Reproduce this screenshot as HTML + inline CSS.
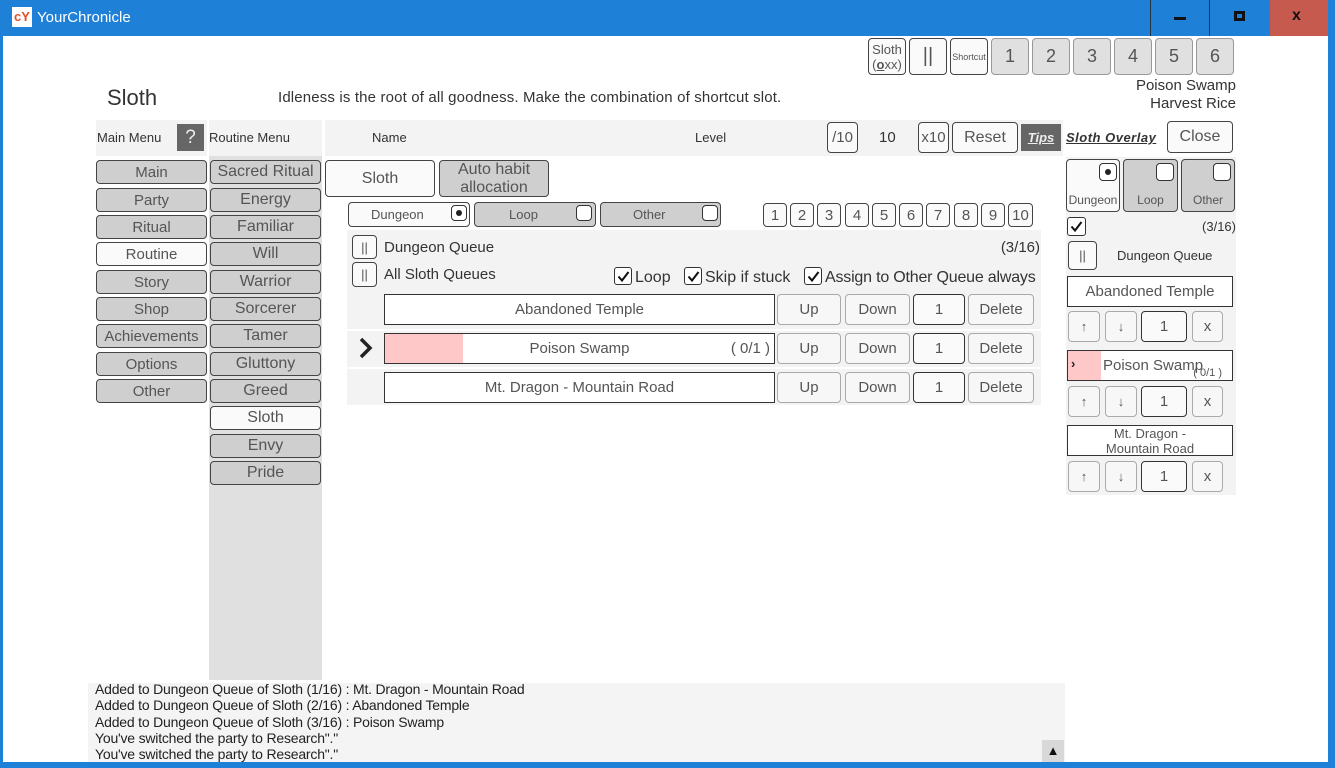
<!DOCTYPE html>
<html><head><meta charset="utf-8"><style>
*{box-sizing:border-box;margin:0;padding:0}
body{width:1335px;height:768px;position:relative;overflow:hidden;background:#1e80d6;font-family:"Liberation Sans",sans-serif;color:#333}
.a{position:absolute}
.b{position:absolute;border:1px solid #444;border-radius:4px;background:#cfcfcf;display:flex;align-items:center;justify-content:center;font-size:15px;color:#555;white-space:nowrap}
.w{background:#fafafa}
.g{background:#e0e0e0;border-color:#999}
.l{background:#f7f7f7;border-color:#aaa}
.t{position:absolute;white-space:nowrap}
.box{position:absolute;border:1px solid #333;background:#fff;display:flex;align-items:center;justify-content:center;font-size:15px;color:#555}
.cb{position:absolute;width:18px;height:18px;border:1px solid #333;border-radius:3px;background:#fff}
.cb svg{position:absolute;left:2px;top:2px}
.rd{position:absolute;width:16px;height:16px;border:1px solid #333;border-radius:4px;background:#fff}
</style></head><body>
<!-- title bar -->
<div class="a" style="left:12px;top:7px;width:20px;height:20px;background:#fff;color:#e2502a;font-size:13px;font-weight:bold;line-height:20px;text-align:center">cY</div>
<div class="t" style="left:37px;top:9px;font-size:15px;color:#fff">YourChronicle</div>
<div class="a" style="left:1150px;top:0;width:60px;height:36px;border-left:1px solid #234;border-right:1px solid #234"></div>
<div class="a" style="left:1174px;top:17px;width:12px;height:3px;background:#111"></div>
<div class="a" style="left:1234px;top:11px;width:11px;height:10px;border:3px solid #111"></div>
<div class="a" style="left:1270px;top:0;width:58px;height:36px;background:#c75a4f"></div>
<div class="t" style="left:1292px;top:7px;font-size:16px;font-weight:bold;color:#111">x</div>
<!-- content -->
<div class="a" style="left:3px;top:36px;width:1325px;height:726px;background:#fff"></div>

<!-- top right buttons -->
<div class="b w" style="left:868px;top:38px;width:38px;height:37px;font-size:13px;line-height:15px;flex-direction:column">Sloth<span>(<u><b>o</b></u>xx)</span></div>
<div class="b w" style="left:909px;top:38px;width:38px;height:37px;font-size:20px">||</div>
<div class="b w" style="left:950px;top:38px;width:38px;height:37px;font-size:9px">Shortcut</div>
<div class="b g" style="left:991px;top:38px;width:38px;height:37px;font-size:18px">1</div>
<div class="b g" style="left:1032px;top:38px;width:38px;height:37px;font-size:18px">2</div>
<div class="b g" style="left:1073px;top:38px;width:38px;height:37px;font-size:18px">3</div>
<div class="b g" style="left:1114px;top:38px;width:38px;height:37px;font-size:18px">4</div>
<div class="b g" style="left:1155px;top:38px;width:38px;height:37px;font-size:18px">5</div>
<div class="b g" style="left:1196px;top:38px;width:38px;height:37px;font-size:18px">6</div>
<div class="t" style="right:99px;top:77px;font-size:15px;text-align:right;line-height:18px">Poison Swamp<br>Harvest Rice</div>

<div class="t" style="left:107px;top:85px;font-size:22px">Sloth</div>
<div class="t" style="left:278px;top:89px;font-size:15px;letter-spacing:0.15px">Idleness is the root of all goodness. Make the combination of shortcut slot.</div>

<!-- header row -->
<div class="a" style="left:96px;top:120px;width:111px;height:36px;background:#f3f3f3"></div>
<div class="a" style="left:209px;top:120px;width:113px;height:36px;background:#f3f3f3"></div>
<div class="a" style="left:325px;top:120px;width:738px;height:36px;background:#f3f3f3"></div>
<div class="t" style="left:97px;top:130px;font-size:13px">Main Menu</div>
<div class="a" style="left:177px;top:124px;width:27px;height:27px;background:#666;color:#eee;font-size:19px;text-align:center;line-height:27px">?</div>
<div class="t" style="left:209px;top:130px;font-size:13px">Routine Menu</div>
<div class="t" style="left:372px;top:130px;font-size:13px">Name</div>
<div class="t" style="left:695px;top:130px;font-size:13px">Level</div>
<div class="b w" style="left:827px;top:122px;width:31px;height:31px;font-size:15px">/10</div>
<div class="t" style="left:879px;top:129px;font-size:15px">10</div>
<div class="b w" style="left:918px;top:122px;width:31px;height:31px;font-size:15px">x10</div>
<div class="b w" style="left:952px;top:122px;width:66px;height:31px;font-size:16px">Reset</div>
<div class="a" style="left:1021px;top:124px;width:40px;height:27px;background:#666;color:#eee;font-size:13px;font-weight:bold;font-style:italic;text-decoration:underline;text-align:center;line-height:27px">Tips</div>
<div class="t" style="left:1066px;top:130px;font-size:13px;font-weight:bold;font-style:italic;text-decoration:underline;letter-spacing:0.5px">Sloth Overlay</div>
<div class="b w" style="left:1167px;top:121px;width:66px;height:32px;font-size:16px">Close</div>

<!-- left menus -->
<div class="a" style="left:209px;top:156px;width:113px;height:524px;background:#e0e0e0"></div>
<div class="b" style="left:96px;top:160px;width:111px;height:24px">Main</div>
<div class="b" style="left:96px;top:188px;width:111px;height:24px">Party</div>
<div class="b" style="left:96px;top:215px;width:111px;height:24px">Ritual</div>
<div class="b w" style="left:96px;top:242px;width:111px;height:24px">Routine</div>
<div class="b" style="left:96px;top:270px;width:111px;height:24px">Story</div>
<div class="b" style="left:96px;top:297px;width:111px;height:24px">Shop</div>
<div class="b" style="left:96px;top:324px;width:111px;height:24px">Achievements</div>
<div class="b" style="left:96px;top:352px;width:111px;height:24px">Options</div>
<div class="b" style="left:96px;top:379px;width:111px;height:24px">Other</div>

<div class="b" style="left:210px;top:160px;width:111px;height:24px;font-size:16px">Sacred Ritual</div>
<div class="b" style="left:210px;top:188px;width:111px;height:24px;font-size:16px">Energy</div>
<div class="b" style="left:210px;top:215px;width:111px;height:24px;font-size:16px">Familiar</div>
<div class="b" style="left:210px;top:242px;width:111px;height:24px;font-size:16px">Will</div>
<div class="b" style="left:210px;top:270px;width:111px;height:24px;font-size:16px">Warrior</div>
<div class="b" style="left:210px;top:297px;width:111px;height:24px;font-size:16px">Sorcerer</div>
<div class="b" style="left:210px;top:324px;width:111px;height:24px;font-size:16px">Tamer</div>
<div class="b" style="left:210px;top:352px;width:111px;height:24px;font-size:16px">Gluttony</div>
<div class="b" style="left:210px;top:379px;width:111px;height:24px;font-size:16px">Greed</div>
<div class="b w" style="left:210px;top:406px;width:111px;height:24px;font-size:16px">Sloth</div>
<div class="b" style="left:210px;top:434px;width:111px;height:24px;font-size:16px">Envy</div>
<div class="b" style="left:210px;top:461px;width:111px;height:24px;font-size:16px">Pride</div>

<!-- tabs -->
<div class="b w" style="left:325px;top:160px;width:110px;height:37px;font-size:16px">Sloth</div>
<div class="b" style="left:439px;top:160px;width:110px;height:37px;font-size:16px;line-height:18px;text-align:center;white-space:normal">Auto habit<br>allocation</div>

<div class="b w" style="left:348px;top:202px;width:122px;height:25px;font-size:13px;justify-content:flex-start;padding-left:22px">Dungeon</div>
<div class="rd" style="left:451px;top:205px"><div class="a" style="left:4px;top:4px;width:6px;height:6px;border-radius:3px;background:#222"></div></div>
<div class="b" style="left:474px;top:202px;width:122px;height:25px;font-size:13px;justify-content:flex-start;padding-left:34px">Loop</div>
<div class="rd" style="left:576px;top:205px"></div>
<div class="b" style="left:600px;top:202px;width:121px;height:25px;font-size:13px;justify-content:flex-start;padding-left:32px">Other</div>
<div class="rd" style="left:702px;top:205px"></div>

<div class="b w" style="left:763px;top:203px;width:24px;height:24px">1</div>
<div class="b w" style="left:790px;top:203px;width:24px;height:24px">2</div>
<div class="b w" style="left:817px;top:203px;width:24px;height:24px">3</div>
<div class="b w" style="left:845px;top:203px;width:24px;height:24px">4</div>
<div class="b w" style="left:872px;top:203px;width:24px;height:24px">5</div>
<div class="b w" style="left:899px;top:203px;width:24px;height:24px">6</div>
<div class="b w" style="left:926px;top:203px;width:24px;height:24px">7</div>
<div class="b w" style="left:954px;top:203px;width:24px;height:24px">8</div>
<div class="b w" style="left:981px;top:203px;width:24px;height:24px">9</div>
<div class="b w" style="left:1008px;top:203px;width:25px;height:24px">10</div>

<!-- queue panel -->
<div class="a" style="left:347px;top:230px;width:694px;height:175px;background:#f3f3f3"></div>
<div class="b w" style="left:352px;top:235px;width:25px;height:24px;font-size:13px">||</div>
<div class="b w" style="left:352px;top:262px;width:25px;height:25px;font-size:13px">||</div>
<div class="t" style="left:384px;top:239px;font-size:15px">Dungeon Queue</div>
<div class="t" style="right:295px;top:239px;font-size:15px">(3/16)</div>
<div class="t" style="left:384px;top:266px;font-size:15px">All Sloth Queues</div>
<div class="cb" style="left:614px;top:267px"><svg width="13" height="13" viewBox="0 0 13 13"><path d="M1.5 6.5 L5 10.5 L11.5 2" fill="none" stroke="#111" stroke-width="2"/></svg></div>
<div class="t" style="left:635px;top:269px;font-size:16px">Loop</div>
<div class="cb" style="left:684px;top:267px"><svg width="13" height="13" viewBox="0 0 13 13"><path d="M1.5 6.5 L5 10.5 L11.5 2" fill="none" stroke="#111" stroke-width="2"/></svg></div>
<div class="t" style="left:705px;top:269px;font-size:16px">Skip if stuck</div>
<div class="cb" style="left:804px;top:267px"><svg width="13" height="13" viewBox="0 0 13 13"><path d="M1.5 6.5 L5 10.5 L11.5 2" fill="none" stroke="#111" stroke-width="2"/></svg></div>
<div class="t" style="left:825px;top:269px;font-size:16px;letter-spacing:-0.2px">Assign to Other Queue always</div>

<div class="a" style="left:347px;top:329px;width:694px;height:2px;background:#fff"></div>
<div class="a" style="left:347px;top:367px;width:694px;height:2px;background:#fff"></div>

<div class="box" style="left:384px;top:294px;width:391px;height:31px">Abandoned Temple</div>
<div class="b l" style="left:777px;top:294px;width:64px;height:31px">Up</div>
<div class="b l" style="left:845px;top:294px;width:65px;height:31px">Down</div>
<div class="b w" style="left:913px;top:294px;width:52px;height:31px;border-color:#333">1</div>
<div class="b l" style="left:968px;top:294px;width:66px;height:31px">Delete</div>

<svg class="a" style="left:358px;top:337px" width="16" height="22" viewBox="0 0 16 22"><path d="M3 2 L12 11 L3 20" fill="none" stroke="#222" stroke-width="3.5"/></svg>
<div class="box" style="left:384px;top:333px;width:391px;height:31px"><div class="a" style="left:0;top:0;width:78px;height:29px;background:#ffc8c8"></div><span style="position:relative">Poison Swamp</span><span class="a" style="right:4px;top:6px">( 0/1 )</span></div>
<div class="b l" style="left:777px;top:333px;width:64px;height:31px">Up</div>
<div class="b l" style="left:845px;top:333px;width:65px;height:31px">Down</div>
<div class="b w" style="left:913px;top:333px;width:52px;height:31px;border-color:#333">1</div>
<div class="b l" style="left:968px;top:333px;width:66px;height:31px">Delete</div>

<div class="box" style="left:384px;top:372px;width:391px;height:31px">Mt. Dragon - Mountain Road</div>
<div class="b l" style="left:777px;top:372px;width:64px;height:31px">Up</div>
<div class="b l" style="left:845px;top:372px;width:65px;height:31px">Down</div>
<div class="b w" style="left:913px;top:372px;width:52px;height:31px;border-color:#333">1</div>
<div class="b l" style="left:968px;top:372px;width:66px;height:31px">Delete</div>

<!-- overlay panel -->
<div class="a" style="left:1066px;top:157px;width:170px;height:338px;background:#f3f3f3"></div>
<div class="b w" style="left:1066px;top:159px;width:54px;height:53px;font-size:12px;align-items:flex-end;padding-bottom:4px">Dungeon</div>
<div class="rd" style="left:1099px;top:163px;width:18px;height:18px"><div class="a" style="left:5px;top:5px;width:6px;height:6px;border-radius:3px;background:#222"></div></div>
<div class="b" style="left:1123px;top:159px;width:55px;height:53px;font-size:12px;align-items:flex-end;padding-bottom:4px">Loop</div>
<div class="rd" style="left:1156px;top:163px;width:18px;height:18px"></div>
<div class="b" style="left:1181px;top:159px;width:54px;height:53px;font-size:12px;align-items:flex-end;padding-bottom:4px">Other</div>
<div class="rd" style="left:1213px;top:163px;width:18px;height:18px"></div>
<div class="cb" style="left:1067px;top:217px;width:19px;height:19px"><svg width="13" height="13" viewBox="0 0 13 13"><path d="M1.5 6.5 L5 10.5 L11.5 2" fill="none" stroke="#111" stroke-width="2"/></svg></div>
<div class="t" style="right:99px;top:219px;font-size:13px">(3/16)</div>
<div class="b w" style="left:1068px;top:241px;width:29px;height:29px;font-size:13px">||</div>
<div class="t" style="left:1117px;top:248px;font-size:13px">Dungeon Queue</div>

<div class="box" style="left:1067px;top:276px;width:166px;height:31px">Abandoned Temple</div>
<div class="b l" style="left:1068px;top:311px;width:32px;height:31px;font-size:13px">↑</div>
<div class="b l" style="left:1105px;top:311px;width:32px;height:31px;font-size:13px">↓</div>
<div class="b w" style="left:1141px;top:311px;width:46px;height:31px;border-color:#333">1</div>
<div class="b l" style="left:1192px;top:311px;width:31px;height:31px">x</div>

<div class="box" style="left:1067px;top:350px;width:166px;height:31px;justify-content:flex-start"><div class="a" style="left:0;top:0;width:33px;height:29px;background:#ffc8c8"></div><span class="a" style="left:3px;top:5px;font-size:13px;font-weight:bold;color:#222">›</span><span style="position:relative;left:35px">Poison Swamp</span><span class="a" style="right:10px;top:16px;font-size:11px">( 0/1 )</span></div>
<div class="b l" style="left:1068px;top:386px;width:32px;height:31px;font-size:13px">↑</div>
<div class="b l" style="left:1105px;top:386px;width:32px;height:31px;font-size:13px">↓</div>
<div class="b w" style="left:1141px;top:386px;width:46px;height:31px;border-color:#333">1</div>
<div class="b l" style="left:1192px;top:386px;width:31px;height:31px">x</div>

<div class="box" style="left:1067px;top:425px;width:166px;height:31px;font-size:13px;line-height:15px;text-align:center">Mt. Dragon -<br>Mountain Road</div>
<div class="b l" style="left:1068px;top:461px;width:32px;height:31px;font-size:13px">↑</div>
<div class="b l" style="left:1105px;top:461px;width:32px;height:31px;font-size:13px">↓</div>
<div class="b w" style="left:1141px;top:461px;width:46px;height:31px;border-color:#333">1</div>
<div class="b l" style="left:1192px;top:461px;width:31px;height:31px">x</div>

<!-- log -->
<div class="a" style="left:88px;top:683px;width:977px;height:79px;background:#f4f4f4"></div>
<div class="t" style="left:95px;top:681px;font-size:14px;line-height:16.3px;color:#222;letter-spacing:-0.2px">Added to Dungeon Queue of Sloth (1/16) : Mt. Dragon - Mountain Road<br>Added to Dungeon Queue of Sloth (2/16) : Abandoned Temple<br>Added to Dungeon Queue of Sloth (3/16) : Poison Swamp<br>You've switched the party to Research"."<br>You've switched the party to Research"."</div>
<div class="a" style="left:1042px;top:740px;width:22px;height:22px;background:#d8d8d8;color:#111;font-size:13px;text-align:center;line-height:22px">▲</div>
</body></html>
